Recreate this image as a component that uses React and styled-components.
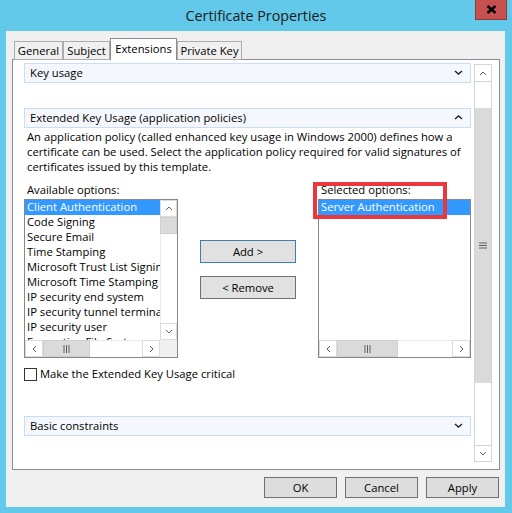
import React from 'react'
import styled, { createGlobalStyle } from 'styled-components'

const GlobalStyle = createGlobalStyle`
  html, body { margin: 0; padding: 0; background: #62c9ea; }
  body { font-family: "Open Sans", "Noto Sans", sans-serif; font-size: 11.25px; color: #000; }
`

const available = [
  'Client Authentication',
  'Code Signing',
  'Secure Email',
  'Time Stamping',
  'Microsoft Trust List Signing',
  'Microsoft Time Stamping',
  'IP security end system',
  'IP security tunnel termination',
  'IP security user',
  'Encrypting File System',
]

function Chevron({ dir = 'down', size = 9, color = '#222', weight = 1.4 }) {
  const h = Math.round(size * 0.6)
  if (dir === 'left' || dir === 'right') {
    const w = h
    const p = dir === 'left'
      ? `M${w - 1} 1 L1 ${size / 2} L${w - 1} ${size - 1}`
      : `M1 1 L${w - 1} ${size / 2} L1 ${size - 1}`
    return (
      <svg width={w} height={size} viewBox={`0 0 ${w} ${size}`}>
        <path d={p} fill="none" stroke={color} strokeWidth={weight} />
      </svg>
    )
  }
  const d = dir === 'down'
    ? `M1 1 L${size / 2} ${h - 1} L${size - 1} 1`
    : `M1 ${h - 1} L${size / 2} 1 L${size - 1} ${h - 1}`
  return (
    <svg width={size} height={h} viewBox={`0 0 ${size} ${h}`}>
      <path d={d} fill="none" stroke={color} strokeWidth={weight} />
    </svg>
  )
}

function Grip({ vertical }) {
  if (vertical) {
    return (
      <svg width="8" height="7" viewBox="0 0 8 7">
        <path d="M0 1h8M0 3.5h8M0 6h8" stroke="#606060" strokeWidth="1" />
      </svg>
    )
  }
  return (
    <svg width="7" height="8" viewBox="0 0 7 8">
      <path d="M1 0v8M3.5 0v8M6 0v8" stroke="#606060" strokeWidth="1" />
    </svg>
  )
}

function App() {
  return (
    <Window>
      <GlobalStyle />
      <TitleBar>
        <Title>Certificate Properties</Title>
        <CloseButton>
          <svg width="11" height="9" viewBox="0 0 11 9">
            <path d="M1.5 1l8 7M9.5 1l-8 7" stroke="#000" strokeWidth="2.4" />
          </svg>
        </CloseButton>
      </TitleBar>
      <Client>
        <TabStrip>
          <Tab $w={49}>General</Tab>
          <Tab $w={47}>Subject</Tab>
          <Tab $w={67} $active>Extensions</Tab>
          <Tab $w={65}>Private Key</Tab>
        </TabStrip>
        <Panel>
          <Content>
            <SectionHeader $mt={0}>
              <span>Key usage</span>
              <Chevron dir="down" />
            </SectionHeader>
            <SectionHeader $mt={25}>
              <span>Extended Key Usage (application policies)</span>
              <Chevron dir="up" />
            </SectionHeader>
            <Description>
              An application policy (called enhanced key usage in Windows 2000) defines how a<br />
              certificate can be used. Select the application policy required for valid signatures of<br />
              certificates issued by this template.
            </Description>
            <ListsRow>
              <Column>
                <Label>Available options:</Label>
                <ListBox $vscroll>
                  <Items>
                    {available.map((item, i) => (
                      <ListItem key={item} $selected={i === 0}>{item}</ListItem>
                    ))}
                  </Items>
                  <VScroll>
                    <ScrollArrow $v><Chevron dir="up" size={8} color="#606060" weight={1} /></ScrollArrow>
                    <VThumb />
                    <VTrack />
                    <ScrollArrow $v><Chevron dir="down" size={8} color="#606060" weight={1} /></ScrollArrow>
                  </VScroll>
                  <HScroll>
                    <ScrollArrow><Chevron dir="left" size={8} color="#606060" weight={1} /></ScrollArrow>
                    <HThumb $w={47}><Grip /></HThumb>
                    <HTrack />
                    <ScrollArrow><Chevron dir="right" size={8} color="#606060" weight={1} /></ScrollArrow>
                  </HScroll>
                  <Corner />
                </ListBox>
              </Column>
              <ButtonsColumn>
                <PushButton $default>Add &gt;</PushButton>
                <PushButton>&lt; Remove</PushButton>
              </ButtonsColumn>
              <Column>
                <Label>Selected options:</Label>
                <ListBox>
                  <Items>
                    <ListItem $selected>Server Authentication</ListItem>
                  </Items>
                  <HScroll>
                    <ScrollArrow><Chevron dir="left" size={8} color="#606060" weight={1} /></ScrollArrow>
                    <HThumb $w={61}><Grip /></HThumb>
                    <HTrack />
                    <ScrollArrow><Chevron dir="right" size={8} color="#606060" weight={1} /></ScrollArrow>
                  </HScroll>
                </ListBox>
                <Highlight />
              </Column>
            </ListsRow>
            <CheckRow>
              <CheckBox />
              <CheckLabel>Make the Extended Key Usage critical</CheckLabel>
            </CheckRow>
            <SectionHeader $mt={34}>
              <span>Basic constraints</span>
              <Chevron dir="down" />
            </SectionHeader>
          </Content>
          <MainScroll>
            <MainArrow><Chevron dir="up" size={8} color="#606060" weight={1} /></MainArrow>
            <MainTrack>
              <MainThumb><Grip vertical /></MainThumb>
            </MainTrack>
            <MainArrow $bottom><Chevron dir="down" size={8} color="#606060" weight={1} /></MainArrow>
          </MainScroll>
        </Panel>
        <ButtonRow>
          <DialogButton>OK</DialogButton>
          <DialogButton>Cancel</DialogButton>
          <DialogButton>Apply</DialogButton>
        </ButtonRow>
      </Client>
    </Window>
  )
}

const Window = styled.div`
  width: 512px;
  height: 513px;
  background: #62c9ea;
  display: flex;
  flex-direction: column;
  overflow: hidden;
`

const TitleBar = styled.div`
  height: 31px;
  flex-shrink: 0;
  display: grid;
  grid-template-columns: 1fr auto 1fr;
  align-items: center;
`

const Title = styled.div`
  grid-column: 2;
  font-size: 14.3px;
  color: #1b1b1b;
  padding-bottom: 1px;
`

const CloseButton = styled.div`
  grid-column: 3;
  justify-self: end;
  align-self: start;
  width: 32px;
  height: 20px;
  margin-right: 5px;
  box-sizing: border-box;
  background: #c75050;
  border: 1px solid #8e3a3a;
  border-top: none;
  display: flex;
  align-items: center;
  justify-content: center;
`

const Client = styled.div`
  margin: 0 7px 0 6px;
  height: 476px;
  background: #f0f0f0;
  display: flex;
  flex-direction: column;
`

const TabStrip = styled.div`
  margin-top: 7px;
  height: 21px;
  padding-left: 8px;
  display: flex;
  align-items: flex-end;
`

const Tab = styled.div`
  box-sizing: border-box;
  width: ${p => p.$w}px;
  height: ${p => (p.$active ? 22 : 19)}px;
  margin-bottom: -1px;
  border: 1px solid ${p => (p.$active ? '#898c95' : '#acacac')};
  border-bottom: ${p => (p.$active ? 'none' : '1px solid #acacac')};
  background: ${p => (p.$active ? '#fff' : '#f0f0f0')};
  position: ${p => (p.$active ? 'relative' : 'static')};
  z-index: ${p => (p.$active ? 1 : 0)};
  display: flex;
  align-items: center;
  justify-content: center;
  padding-bottom: ${p => (p.$active ? 3 : 1)}px;
  white-space: nowrap;
`

const Panel = styled.div`
  margin: 0 5px 0 6px;
  height: 411px;
  box-sizing: border-box;
  border: 1px solid #898c95;
  background: #fff;
  display: flex;
`

const Content = styled.div`
  flex: 1;
  min-width: 0;
  padding: 3px 0 0 11px;
  overflow: hidden;
  line-height: 15px;
`

const SectionHeader = styled.div`
  box-sizing: border-box;
  height: 20px;
  margin-top: ${p => p.$mt}px;
  border: 1px solid #c9ddf5;
  background: #f4f8fe;
  display: flex;
  align-items: center;
  justify-content: space-between;
  padding: 0 7px 2px 5px;
`

const Description = styled.div`
  margin: 1px 0 0 3px;
  white-space: nowrap;
`

const ListsRow = styled.div`
  margin-top: 9px;
  display: grid;
  grid-template-columns: 154px 96px 153px;
  column-gap: 22px;
`

const Column = styled.div`
  position: relative;
  display: flex;
  flex-direction: column;
`

const Label = styled.div`
  height: 16px;
  line-height: 14px;
  padding-left: 3px;
  white-space: nowrap;
`

const ListBox = styled.div`
  box-sizing: border-box;
  height: 159px;
  border: 1px solid #828790;
  display: grid;
  grid-template-columns: ${p => (p.$vscroll ? '1fr 17px' : '1fr')};
  grid-template-rows: 1fr 17px;
  overflow: hidden;
`

const Items = styled.div`
  overflow: hidden;
  min-width: 0;
`

const ListItem = styled.div`
  height: 15px;
  line-height: 13px;
  padding-left: 2px;
  white-space: nowrap;
  background: ${p => (p.$selected ? '#3399ff' : 'transparent')};
  color: ${p => (p.$selected ? '#fff' : '#000')};
`

const VScroll = styled.div`
  display: flex;
  flex-direction: column;
  background: #fff;
`

const ScrollArrow = styled.div`
  box-sizing: border-box;
  width: ${p => (p.$v ? '17px' : '18px')};
  height: 17px;
  flex-shrink: 0;
  border: 1px solid #dcdcdc;
  background: #fff;
  display: flex;
  align-items: center;
  justify-content: center;
`

const VThumb = styled.div`
  height: 17px;
  background: #dadada;
  border: 1px solid #cfcfcf;
  box-sizing: border-box;
`

const VTrack = styled.div`
  flex: 1;
  background: #fff;
  border-left: 1px solid #eaeaea;
`

const HScroll = styled.div`
  display: flex;
  background: #fff;
`

const HThumb = styled.div`
  box-sizing: border-box;
  width: ${p => p.$w}px;
  background: #dadada;
  border: 1px solid #cfcfcf;
  display: flex;
  align-items: center;
  justify-content: center;
`

const HTrack = styled.div`
  flex: 1;
  background: #fff;
  border-top: 1px solid #eaeaea;
`

const Corner = styled.div`
  background: #f0f0f0;
`

const ButtonsColumn = styled.div`
  display: flex;
  flex-direction: column;
  gap: 13px;
  padding-top: 57px;
`

const PushButton = styled.div`
  box-sizing: border-box;
  height: 23px;
  border: 1px solid ${p => (p.$default ? '#3c7fb1' : '#707070')};
  background: #e1e1e1;
  display: flex;
  align-items: center;
  justify-content: center;
  padding-bottom: 1px;
`

const Highlight = styled.div`
  position: absolute;
  left: -5px;
  top: -1px;
  width: 134px;
  height: 37px;
  box-sizing: border-box;
  border: 4px solid #e8383d;
  pointer-events: none;
`

const CheckRow = styled.div`
  margin-top: 9px;
  display: flex;
  align-items: center;
  gap: 3px;
  height: 15px;
`

const CheckBox = styled.div`
  box-sizing: border-box;
  width: 13px;
  height: 13px;
  border: 1px solid #333;
  background: #fff;
`

const CheckLabel = styled.span`
  line-height: 13px;
  padding-bottom: 2px;
`

const MainScroll = styled.div`
  width: 18px;
  margin: 4px 7px 7px 3px;
  box-sizing: border-box;
  border: 1px solid #d4d4d4;
  display: flex;
  flex-direction: column;
  background: #fff;
`

const MainArrow = styled.div`
  height: ${p => (p.$bottom ? 16 : 17)}px;
  flex-shrink: 0;
  box-sizing: border-box;
  border-top: ${p => (p.$bottom ? '1px solid #d4d4d4' : 'none')};
  border-bottom: ${p => (p.$bottom ? 'none' : '1px solid #d4d4d4')};
  display: flex;
  align-items: center;
  justify-content: center;
`

const MainTrack = styled.div`
  flex: 1;
  padding-top: 26px;
`

const MainThumb = styled.div`
  height: 275px;
  background: #dadada;
  display: flex;
  align-items: center;
  justify-content: center;
`

const ButtonRow = styled.div`
  margin-top: 7px;
  padding-right: 6px;
  display: flex;
  justify-content: flex-end;
  gap: 8px;
`

const DialogButton = styled.div`
  box-sizing: border-box;
  width: 73px;
  height: 21px;
  border: 1px solid #707070;
  background: #dddddd;
  display: flex;
  align-items: center;
  justify-content: center;
  padding-bottom: 1px;
`

export default App
